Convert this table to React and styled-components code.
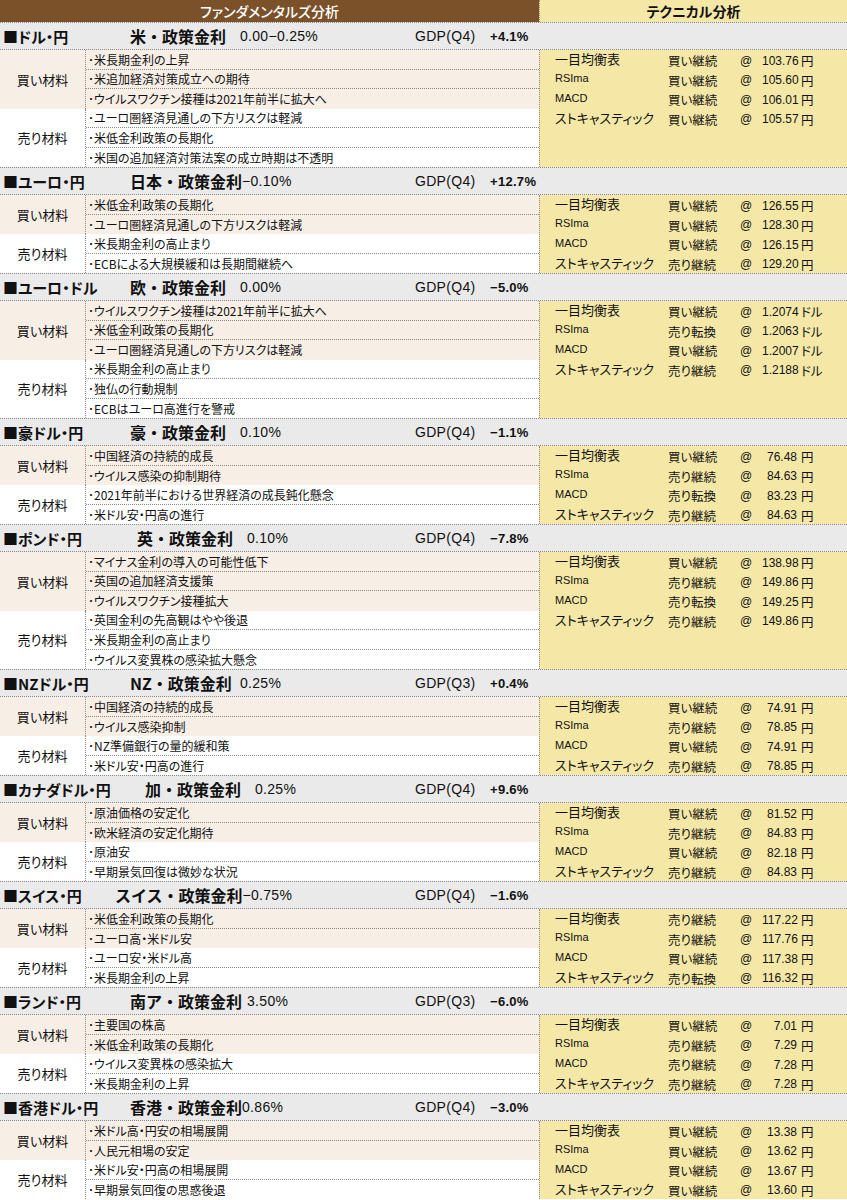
import styled, { createGlobalStyle } from "styled-components";

const GlobalStyle = createGlobalStyle`
    body {
        margin: 0;
        background: #ffffff;
        font-family: "Noto Sans CJK JP", "Noto Sans", sans-serif;
        font-feature-settings: "palt";
        color: #111111;
    }
`;

const BUY = "買い材料";
const SELL = "売り材料";

const sections = [
    {
        name: "■ドル・円", policy: "米・政策金利", rate: "0.00−0.25%", gdp: "GDP(Q4)", growth: "+4.1%",
        buy: ["米長期金利の上昇", "米追加経済対策成立への期待", "ウイルスワクチン接種は2021年前半に拡大へ"],
        sell: ["ユーロ圏経済見通しの下方リスクは軽減", "米低金利政策の長期化", "米国の追加経済対策法案の成立時期は不透明"],
        unit: "円",
        tech: [["買い継続", "103.76"], ["買い継続", "105.60"], ["買い継続", "106.01"], ["買い継続", "105.57"]],
    },
    {
        name: "■ユーロ・円", policy: "日本・政策金利", rate: "−0.10%", gdp: "GDP(Q4)", growth: "+12.7%",
        buy: ["米低金利政策の長期化", "ユーロ圏経済見通しの下方リスクは軽減"],
        sell: ["米長期金利の高止まり", "ECBによる大規模緩和は長期間継続へ"],
        unit: "円",
        tech: [["買い継続", "126.55"], ["買い継続", "128.30"], ["買い継続", "126.15"], ["売り継続", "129.20"]],
    },
    {
        name: "■ユーロ・ドル", policy: "欧・政策金利", rate: "0.00%", gdp: "GDP(Q4)", growth: "−5.0%",
        buy: ["ウイルスワクチン接種は2021年前半に拡大へ", "米低金利政策の長期化", "ユーロ圏経済見通しの下方リスクは軽減"],
        sell: ["米長期金利の高止まり", "独仏の行動規制", "ECBはユーロ高進行を警戒"],
        unit: "ドル",
        tech: [["買い継続", "1.2074"], ["売り転換", "1.2063"], ["買い継続", "1.2007"], ["売り継続", "1.2188"]],
    },
    {
        name: "■豪ドル・円", policy: "豪・政策金利", rate: "0.10%", gdp: "GDP(Q4)", growth: "−1.1%",
        buy: ["中国経済の持続的成長", "ウイルス感染の抑制期待"],
        sell: ["2021年前半における世界経済の成長鈍化懸念", "米ドル安・円高の進行"],
        unit: "円",
        tech: [["買い継続", "76.48"], ["売り継続", "84.63"], ["売り転換", "83.23"], ["売り継続", "84.63"]],
    },
    {
        name: "■ポンド・円", policy: "英・政策金利", rate: "0.10%", gdp: "GDP(Q4)", growth: "−7.8%", offset: 7,
        buy: ["マイナス金利の導入の可能性低下", "英国の追加経済支援策", "ウイルスワクチン接種拡大"],
        sell: ["英国金利の先高観はやや後退", "米長期金利の高止まり", "ウイルス変異株の感染拡大懸念"],
        unit: "円",
        tech: [["買い継続", "138.98"], ["売り継続", "149.86"], ["売り転換", "149.25"], ["売り継続", "149.86"]],
    },
    {
        name: "■NZドル・円", policy: "NZ・政策金利", rate: "0.25%", gdp: "GDP(Q3)", growth: "+0.4%",
        buy: ["中国経済の持続的成長", "ウイルス感染抑制"],
        sell: ["NZ準備銀行の量的緩和策", "米ドル安・円高の進行"],
        unit: "円",
        tech: [["買い継続", "74.91"], ["売り継続", "78.85"], ["買い継続", "74.91"], ["売り継続", "78.85"]],
    },
    {
        name: "■カナダドル・円", policy: "加・政策金利", rate: "0.25%", gdp: "GDP(Q4)", growth: "+9.6%", offset: 15,
        buy: ["原油価格の安定化", "欧米経済の安定化期待"],
        sell: ["原油安", "早期景気回復は微妙な状況"],
        unit: "円",
        tech: [["買い継続", "81.52"], ["売り継続", "84.83"], ["買い継続", "82.18"], ["売り継続", "84.83"]],
    },
    {
        name: "■スイス・円", policy: "スイス・政策金利", rate: "−0.75%", gdp: "GDP(Q4)", growth: "−1.6%", offset: -15,
        buy: ["米低金利政策の長期化", "ユーロ高・米ドル安"],
        sell: ["ユーロ安・米ドル高", "米長期金利の上昇"],
        unit: "円",
        tech: [["売り継続", "117.22"], ["売り継続", "117.76"], ["買い継続", "117.38"], ["売り転換", "116.32"]],
    },
    {
        name: "■ランド・円", policy: "南ア・政策金利", rate: "3.50%", gdp: "GDP(Q3)", growth: "−6.0%", gap: 5,
        buy: ["主要国の株高", "米低金利政策の長期化"],
        sell: ["ウイルス変異株の感染拡大", "米長期金利の上昇"],
        unit: "円",
        tech: [["買い継続", "7.01"], ["売り継続", "7.29"], ["売り継続", "7.28"], ["売り継続", "7.28"]],
    },
    {
        name: "■香港ドル・円", policy: "香港・政策金利", rate: "0.86%", gdp: "GDP(Q4)", growth: "−3.0%",
        buy: ["米ドル高・円安の相場展開", "人民元相場の安定"],
        sell: ["米ドル安・円高の相場展開", "早期景気回復の思惑後退"],
        unit: "円",
        tech: [["買い継続", "13.38"], ["買い継続", "13.62"], ["買い継続", "13.67"], ["買い継続", "13.60"]],
    },
];

const indicators = ["一目均衡表", "RSIma", "MACD", "ストキャスティック"];

function Group({ label, items, kind }) {
    return (
        <GroupBox $kind={kind}>
            <GroupLabel>{label}</GroupLabel>
            <ItemList>
                {items.map((item) => (
                    <Item key={item}>･{item}</Item>
                ))}
            </ItemList>
        </GroupBox>
    );
}

function Section({ data }) {
    return (
        <>
            <TitleRow>
                <TitleLeft>
                    <PairName>{data.name}</PairName>
                    <Policy $offset={data.offset || 0}>
                        <PolicyLabel>{data.policy}</PolicyLabel>
                        <Rate $gap={data.gap || 0}>{data.rate}</Rate>
                    </Policy>
                </TitleLeft>
                <Gdp>{data.gdp}</Gdp>
                <Growth>{data.growth}</Growth>
            </TitleRow>
            <Body>
                <Fundamentals>
                    <Group label={BUY} items={data.buy} kind="buy" />
                    <Group label={SELL} items={data.sell} kind="sell" />
                </Fundamentals>
                <TechPanel>
                    {data.tech.map(([signal, price], i) => (
                        <TechRow key={indicators[i]}>
                            <Indicator $latin={i === 1 || i === 2}>{indicators[i]}</Indicator>
                            <Signal>{signal}</Signal>
                            <At>@</At>
                            <Price>{price}</Price>
                            <Unit>{data.unit}</Unit>
                        </TechRow>
                    ))}
                </TechPanel>
            </Body>
        </>
    );
}

export default function App() {
    return (
        <Page>
            <GlobalStyle />
            <Header>
                <HeaderCell $dark>ファンダメンタルズ分析</HeaderCell>
                <HeaderCell>テクニカル分析</HeaderCell>
            </Header>
            {sections.map((s) => (
                <Section key={s.name} data={s} />
            ))}
        </Page>
    );
}

const dotted = "1px dotted #8a8a8a";

const Page = styled.div`
    width: 847px;
`;

const Header = styled.div`
    display: grid;
    grid-template-columns: 539px 1fr;
    height: 22px;
`;

const HeaderCell = styled.div`
    display: flex;
    align-items: center;
    justify-content: center;
    background: ${(p) => (p.$dark ? "#7a5129" : "#f5e8a7")};
    color: ${(p) => (p.$dark ? "#ffffff" : "#111111")};
    font-size: 14px;
    font-weight: ${(p) => (p.$dark ? 500 : 700)};
    border-left: ${(p) => (p.$dark ? "none" : dotted)};
`;

const TitleRow = styled.div`
    display: grid;
    grid-template-columns: 415px 75px 1fr;
    align-items: center;
    height: 28px;
    background: #eaeaea;
    border-top: ${dotted};
    border-bottom: ${dotted};
    box-sizing: border-box;
`;

const TitleLeft = styled.div`
    display: flex;
    align-items: center;
    white-space: nowrap;
`;

const PairName = styled.div`
    width: 130px;
    flex-shrink: 0;
    padding-left: 3px;
    box-sizing: border-box;
    font-size: 15px;
    font-weight: 700;
`;

const Policy = styled.div`
    display: flex;
    align-items: center;
    margin-left: ${(p) => p.$offset}px;
`;

const PolicyLabel = styled.span`
    min-width: 110px;
    font-size: 16px;
    font-weight: 700;
    font-feature-settings: normal;
`;

const Rate = styled.span`
    margin-left: ${(p) => p.$gap}px;
    font-size: 14px;
    font-family: "Liberation Sans", "Noto Sans", sans-serif;
    letter-spacing: 0.3px;
`;

const Gdp = styled.span`
    font-size: 14px;
    font-family: "Liberation Sans", "Noto Sans", sans-serif;
    letter-spacing: 0.3px;
`;

const Growth = styled.span`
    font-size: 13px;
    font-weight: 700;
    font-family: "Liberation Sans", "Noto Sans", sans-serif;
    letter-spacing: 0.3px;
`;

const Body = styled.div`
    display: grid;
    grid-template-columns: 539px 1fr;
`;

const Fundamentals = styled.div`
    display: flex;
    flex-direction: column;
`;

const GroupBox = styled.div`
    display: grid;
    grid-template-columns: 86px 1fr;
    background: ${(p) => (p.$kind === "buy" ? "#f7eee6" : "#ffffff")};
`;

const GroupLabel = styled.div`
    display: flex;
    align-items: center;
    justify-content: center;
    font-size: 13px;
    border-right: ${dotted};
`;

const ItemList = styled.div`
    display: flex;
    flex-direction: column;
`;

const Item = styled.div`
    height: 19.5px;
    box-sizing: border-box;
    display: flex;
    align-items: center;
    padding-left: 2px;
    font-size: 12px;
    border-bottom: ${dotted};
    white-space: nowrap;
    &:last-child {
        border-bottom: none;
    }
`;

const TechPanel = styled.div`
    background: #f5e8a7;
    border-left: ${dotted};
    padding-left: 15px;
    overflow: hidden;
    display: flex;
    flex-direction: column;
`;

const TechRow = styled.div`
    display: grid;
    grid-template-columns: 113px 72px 22px 35px auto;
    align-items: center;
    height: 19.5px;
    flex-shrink: 0;
    white-space: nowrap;
`;

const Indicator = styled.span`
    font-size: ${(p) => (p.$latin ? "11px" : "13px")};
    font-family: ${(p) => (p.$latin ? '"Liberation Sans", sans-serif' : "inherit")};
    transform: translateY(${(p) => (p.$latin ? "-1px" : "-1px")});
`;

const Signal = styled.span`
    font-size: 12.5px;
    transform: translateY(1px);
`;

const At = styled.span`
    font-size: 12px;
    font-family: "Liberation Sans", sans-serif;
    transform: translateY(1px);
`;

const Price = styled.span`
    text-align: right;
    font-size: 12px;
    font-family: "Liberation Sans", sans-serif;
    transform: translateY(1px);
`;

const Unit = styled.span`
    padding-left: 4px;
    font-size: 12.5px;
    transform: translateY(1px);
`;
